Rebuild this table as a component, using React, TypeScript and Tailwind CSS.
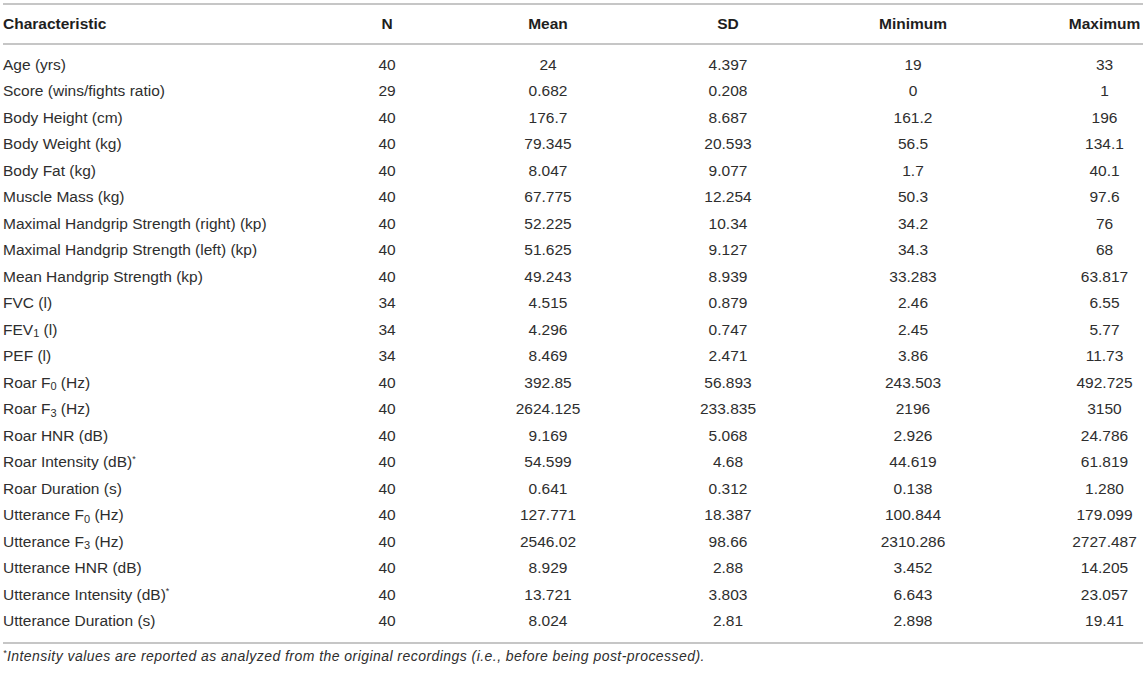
import type { ReactNode } from "react";

type Row = [ReactNode, string, string, string, string, string];

const Sub = ({ children }: { children: ReactNode }) => <sub className="text-[11px]">{children}</sub>;
const Star = () => <sup className="text-[9px] -top-[0.6em]">*</sup>;

const ROWS: Row[] = [
  ["Age (yrs)", "40", "24", "4.397", "19", "33"],
  ["Score (wins/fights ratio)", "29", "0.682", "0.208", "0", "1"],
  ["Body Height (cm)", "40", "176.7", "8.687", "161.2", "196"],
  ["Body Weight (kg)", "40", "79.345", "20.593", "56.5", "134.1"],
  ["Body Fat (kg)", "40", "8.047", "9.077", "1.7", "40.1"],
  ["Muscle Mass (kg)", "40", "67.775", "12.254", "50.3", "97.6"],
  ["Maximal Handgrip Strength (right) (kp)", "40", "52.225", "10.34", "34.2", "76"],
  ["Maximal Handgrip Strength (left) (kp)", "40", "51.625", "9.127", "34.3", "68"],
  ["Mean Handgrip Strength (kp)", "40", "49.243", "8.939", "33.283", "63.817"],
  ["FVC (l)", "34", "4.515", "0.879", "2.46", "6.55"],
  [<>FEV<Sub>1</Sub> (l)</>, "34", "4.296", "0.747", "2.45", "5.77"],
  ["PEF (l)", "34", "8.469", "2.471", "3.86", "11.73"],
  [<>Roar F<Sub>0</Sub> (Hz)</>, "40", "392.85", "56.893", "243.503", "492.725"],
  [<>Roar F<Sub>3</Sub> (Hz)</>, "40", "2624.125", "233.835", "2196", "3150"],
  ["Roar HNR (dB)", "40", "9.169", "5.068", "2.926", "24.786"],
  [<>Roar Intensity (dB)<Star /></>, "40", "54.599", "4.68", "44.619", "61.819"],
  ["Roar Duration (s)", "40", "0.641", "0.312", "0.138", "1.280"],
  [<>Utterance F<Sub>0</Sub> (Hz)</>, "40", "127.771", "18.387", "100.844", "179.099"],
  [<>Utterance F<Sub>3</Sub> (Hz)</>, "40", "2546.02", "98.66", "2310.286", "2727.487"],
  ["Utterance HNR (dB)", "40", "8.929", "2.88", "3.452", "14.205"],
  [<>Utterance Intensity (dB)<Star /></>, "40", "13.721", "3.803", "6.643", "23.057"],
  ["Utterance Duration (s)", "40", "8.024", "2.81", "2.898", "19.41"],
];

const HEAD = ["Characteristic", "N", "Mean", "SD", "Minimum", "Maximum"];

const GRID = "grid grid-cols-[371px_26px_296px_64px_306px_77px]";

export default function App() {
  return (
    <div className="w-[1145px] h-[674px] bg-white text-[#2e2e2e] font-['Liberation_Sans',Arial,sans-serif] overflow-hidden">
      <div className="ml-[3px] w-[1140px] pt-[3px]">
        <div className="h-[2px] bg-[#c6c6c6]" />

        {/* header */}
        <div className={`${GRID} h-[38px] items-center text-[15.5px] font-bold text-[#1e1e1e]`}>
          {HEAD.map((h, i) => (
            <div key={h} className={`whitespace-nowrap ${i === 0 ? "text-left" : "text-center"}`}>
              {h}
            </div>
          ))}
        </div>
        <div className="h-[2px] bg-[#c6c6c6]" />

        {/* body */}
        <div className="pt-[6px] pb-[8px] text-[15.5px]">
          {ROWS.map((row, r) => (
            <div key={r} className={`${GRID} h-[26.5px] items-center`}>
              {row.map((cell, i) => (
                <div key={i} className={`whitespace-nowrap leading-none ${i === 0 ? "text-left" : "text-center"}`}>
                  {cell}
                </div>
              ))}
            </div>
          ))}
        </div>
        <div className="h-[2px] bg-[#c6c6c6]" />

        <p className="pt-[4px] text-[14px] tracking-[0.45px] italic leading-4 whitespace-nowrap">
          <Star />
          Intensity values are reported as analyzed from the original recordings (i.e., before being post-processed).
        </p>
      </div>
    </div>
  );
}
